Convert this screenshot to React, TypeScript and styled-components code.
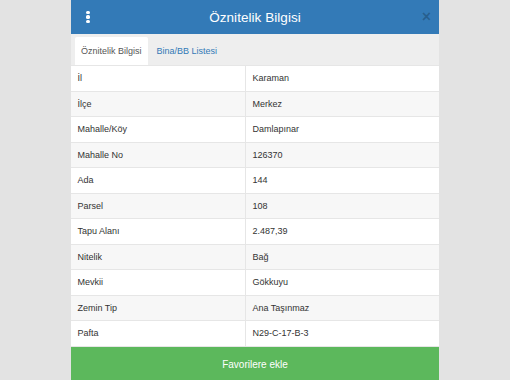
import React from "react";
import styled, { createGlobalStyle } from "styled-components";

const Global = createGlobalStyle`
  html, body { margin: 0; padding: 0; background: #e3e3e3; }
  body { font-family: "Liberation Sans", Arial, sans-serif; }
`;

const Page = styled.div`
  width: 510px;
  height: 380px;
  display: flex;
  justify-content: center;
  overflow: hidden;
`;

const Panel = styled.div`
  width: 368px;
  height: 380px;
  background: #ffffff;
  display: flex;
  flex-direction: column;
  overflow: hidden;
`;

const Header = styled.div`
  height: 34px;
  flex: none;
  background: #337ab7;
  display: grid;
  grid-template-columns: 34px 1fr 34px;
  align-items: center;
`;

const MenuDots = styled.div`
  display: flex;
  flex-direction: column;
  align-items: center;
  gap: 1.7px;
  span {
    width: 3.2px;
    height: 3.2px;
    border-radius: 50%;
    background: #ffffff;
  }
`;

const Title = styled.div`
  color: #ffffff;
  font-size: 13.5px;
  text-align: center;
  letter-spacing: 0.05px;
`;

const Close = styled.div`
  color: rgba(0, 0, 0, 0.22);
  font-size: 16px;
  font-weight: bold;
  line-height: 1;
  text-align: right;
  padding-right: 8px;
`;

const TabBar = styled.div`
  height: 31px;
  flex: none;
  background: #eeeeee;
  display: flex;
  align-items: flex-end;
  gap: 3px;
  padding-left: 4px;
  box-sizing: border-box;
`;

const Tab = styled.div<{ $active?: boolean }>`
  height: 28px;
  padding: 0 6px;
  display: flex;
  align-items: center;
  font-size: 9px;
  color: ${(p) => (p.$active ? "#555555" : "#337ab7")};
  background: ${(p) => (p.$active ? "#ffffff" : "transparent")};
  border-radius: 2px 2px 0 0;
`;

const Table = styled.div`
  display: flex;
  flex-direction: column;
  border-top: 1px solid #e6e6e6;
`;

const Row = styled.div<{ $striped?: boolean }>`
  display: grid;
  grid-template-columns: 175px 1fr;
  height: 25.5px;
  box-sizing: border-box;
  border-bottom: 1px solid #e6e6e6;
  background: ${(p) => (p.$striped ? "#f7f7f7" : "#ffffff")};
`;

const Cell = styled.div<{ $key?: boolean }>`
  display: flex;
  align-items: center;
  padding-left: 6.5px;
  font-size: 9px;
  color: #333333;
  border-right: ${(p) => (p.$key ? "1px solid #e6e6e6" : "none")};
`;

const FavButton = styled.div`
  height: 35px;
  flex: none;
  background: #5cb85c;
  color: #ffffff;
  font-size: 10px;
  display: flex;
  align-items: center;
  justify-content: center;
`;

const rows: [string, string][] = [
  ["İl", "Karaman"],
  ["İlçe", "Merkez"],
  ["Mahalle/Köy", "Damlapınar"],
  ["Mahalle No", "126370"],
  ["Ada", "144"],
  ["Parsel", "108"],
  ["Tapu Alanı", "2.487,39"],
  ["Nitelik", "Bağ"],
  ["Mevkii", "Gökkuyu"],
  ["Zemin Tip", "Ana Taşınmaz"],
  ["Pafta", "N29-C-17-B-3"],
];

export default function App() {
  return (
    <>
      <Global />
      <Page>
        <Panel>
          <Header>
            <MenuDots>
              <span />
              <span />
              <span />
            </MenuDots>
            <Title>Öznitelik Bilgisi</Title>
            <Close>×</Close>
          </Header>
          <TabBar>
            <Tab $active>Öznitelik Bilgisi</Tab>
            <Tab>Bina/BB Listesi</Tab>
          </TabBar>
          <Table>
            {rows.map(([k, v], i) => (
              <Row key={k} $striped={i % 2 === 1}>
                <Cell $key>{k}</Cell>
                <Cell>{v}</Cell>
              </Row>
            ))}
          </Table>
          <FavButton>Favorilere ekle</FavButton>
        </Panel>
      </Page>
    </>
  );
}
